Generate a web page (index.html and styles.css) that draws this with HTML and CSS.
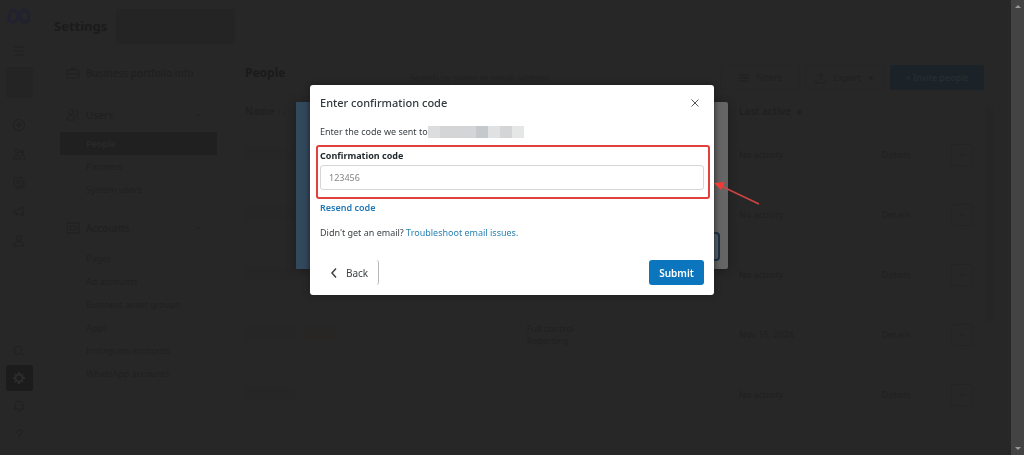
FILE: index.html
```html
<!DOCTYPE html>
<html lang="en">
<head>
<meta charset="utf-8">
<title>Settings</title>
<meta name="viewport" content="width=device-width, initial-scale=1">
<link rel="stylesheet" href="styles.css">
</head>
<body>
<div class="app">
  <nav class="rail" aria-label="Tools">
    <svg class="logo" viewBox="0 0 24 16"><path d="M2 11C2 6 4 2 7 2c4 0 6 12 10.500 12C20 14 22 13 22 10.500 22 6 20 2 17 2c-4 0-6 12-10.500 12C4 14 2 13 2 11z"/></svg>
    <button class="rail-btn" aria-label="Menu"><svg viewBox="0 0 14 14"><path d="M2 3h10M2 7h10M2 11h10"/></svg></button>
    <span class="avatar"></span>
    <button class="rail-btn" aria-label="Create"><svg viewBox="0 0 14 14"><circle cx="7" cy="7" r="5.500"/><path d="M7 4v6M4 7h6"/></svg></button>
    <button class="rail-btn" aria-label="People"><svg viewBox="0 0 14 14"><circle cx="5" cy="4" r="2"/><circle cx="10" cy="5" r="1.500"/><path d="M1 12c0-5 8-5 8 0zM10 8c2 0 3 2 3 4h-2"/></svg></button>
    <button class="rail-btn" aria-label="Content"><svg viewBox="0 0 14 14"><path d="M2 2h8v8H2zM4 12h8V4M4 5h4M4 7h4"/></svg></button>
    <button class="rail-btn" aria-label="Ads"><svg viewBox="0 0 14 14"><path d="M2 5h3l6-3v9L5 8H2zM4 8l1 4"/></svg></button>
    <button class="rail-btn" aria-label="Audience"><svg viewBox="0 0 14 14"><circle cx="7" cy="4" r="2.500"/><path d="M2 12c0-6 10-6 10 0z"/></svg></button>
    <span class="rail-space"></span>
    <button class="rail-btn" aria-label="Search"><svg viewBox="0 0 14 14"><circle cx="6" cy="6" r="4"/><path d="M9 9l4 4"/></svg></button>
    <button class="rail-btn current" aria-label="Settings"><svg viewBox="0 0 14 14"><circle cx="7" cy="7" r="3.500"/><path d="M7 1v2M7 11v2M1 7h2M11 7h2M3 3l1 1M10 10l1 1M11 3l-1 1M4 10l-1 1"/></svg></button>
    <button class="rail-btn" aria-label="Notifications"><svg viewBox="0 0 14 14"><path d="M2 10l1-2V6c0-5 8-5 8 0v2l1 2zM5 12h4"/></svg></button>
    <button class="rail-btn" aria-label="Help"><svg viewBox="0 0 14 14"><path d="M4 5c0-4 6-4 6-1 0 2-3 2-3 5M7 11v1"/></svg></button>
  </nav>

  <div class="page">
    <header class="top"><h1>Settings</h1><span class="account"></span></header>
    <div class="columns">
      <nav class="side" aria-label="Settings sections">
        <a class="group" href="#info"><svg viewBox="0 0 14 14"><path d="M1 4h12v8H1zM5 4V2h4v2M1 8h12"/></svg><span>Business portfolio info</span></a>
        <a class="group users" href="#users"><svg viewBox="0 0 14 14"><circle cx="5" cy="4" r="2.500"/><path d="M1 12c0-6 8-6 8 0zM9 2c4 0 3 4 1 5l3 5"/></svg><span>Users</span><svg class="chev" viewBox="0 0 10 10"><path d="M2 7l3-3 3 3"/></svg></a>
        <a class="item active" href="#people">People</a>
        <a class="item" href="#partners">Partners</a>
        <a class="item" href="#system">System users</a>
        <a class="group accounts" href="#accounts"><svg viewBox="0 0 14 14"><path d="M1 2h12v10H1zM4 5h6v4H4z"/></svg><span>Accounts</span><svg class="chev" viewBox="0 0 10 10"><path d="M2 7l3-3 3 3"/></svg></a>
        <a class="item" href="#pages">Pages</a>
        <a class="item" href="#ads">Ad accounts</a>
        <a class="item" href="#groups">Business asset groups</a>
        <a class="item" href="#apps">Apps</a>
        <a class="item" href="#instagram">Instagram accounts</a>
        <a class="item" href="#whatsapp">WhatsApp accounts</a>
      </nav>
      <main class="people">
        <div class="bar">
          <h2>People</h2>
          <input class="search" type="text" aria-label="Search people" placeholder="Search by name or email address">
          <button class="tool"><svg viewBox="0 0 12 12"><path d="M1 3h10M1 6h10M1 9h10M4 2v2M8 5v2M4 8v2"/></svg>Filters</button>
          <button class="tool"><svg viewBox="0 0 12 12"><path d="M6 8V2M3 4l3-3 3 3M1 8v3h10V8"/></svg>Export<span class="down">▼</span></button>
          <button class="tool invite">+ Invite people</button>
        </div>
        <div class="list">
          <table>
            <colgroup><col class="c-name"><col class="c-access"><col class="c-active"><col class="c-details"><col></colgroup>
            <thead><tr><th>Name ↑↓</th><th></th><th>Last active &nbsp;●</th><th></th><th></th></tr></thead>
            <tbody>
              <tr><td><span class="smudge"></span></td><td></td><td>No activity</td><td>Details</td><td><button class="more" aria-label="More">•••</button></td></tr>
              <tr><td><span class="smudge"></span></td><td></td><td>No activity</td><td>Details</td><td><button class="more" aria-label="More">•••</button></td></tr>
              <tr><td><span class="smudge"></span></td><td></td><td>No activity</td><td>Details</td><td><button class="more" aria-label="More">•••</button></td></tr>
              <tr><td><span class="smudge"></span><span class="smudge warm"></span></td><td>Full control<br>Reporting</td><td>Nov 15, 2024</td><td>Details</td><td><button class="more" aria-label="More">•••</button></td></tr>
              <tr><td><span class="smudge"></span></td><td></td><td>No activity</td><td>Details</td><td><button class="more" aria-label="More">•••</button></td></tr>
            </tbody>
          </table>
          <span class="thumb"></span>
        </div>
      </main>
    </div>
  </div>

  <div class="scroll" aria-hidden="true">
    <svg viewBox="0 0 13 13"><path d="M4 8l3-3 3 3z"/></svg>
    <svg viewBox="0 0 13 13"><path d="M4 5l3 3 3-3z"/></svg>
  </div>
</div>

<div class="overlay">
  <div class="under"><span class="under-art"></span><span class="under-btn"></span></div>
  <form class="dialog" role="dialog" aria-labelledby="dialog-title">
    <div class="head">
      <h2 id="dialog-title">Enter confirmation code</h2>
      <button type="button" class="close" aria-label="Close"><svg viewBox="0 0 10 10"><path d="M1.500 1.500l7 7M8.500 1.500l-7 7"/></svg></button>
    </div>
    <p class="sent">Enter the code we sent to <span class="masked"><i></i><i></i><i></i><i></i><i></i><i></i><i></i><i></i></span></p>
    <div class="field">
      <label for="code">Confirmation code</label>
      <input id="code" type="text" placeholder="123456">
    </div>
    <a class="resend" href="#resend">Resend code</a>
    <p class="trouble">Didn't get an email? <a href="#troubleshoot">Troubleshoot email issues.</a></p>
    <div class="actions">
      <button type="button" class="back"><svg viewBox="0 0 8 12"><path d="M6 1.500L2 6l4 4.500"/></svg>Back</button>
      <button type="submit" class="submit">Submit</button>
    </div>
    <svg class="arrow" viewBox="0 0 48 28"><path class="shaft" d="M8 6l38 18"/><path class="tip" d="M1 3l11-1-4 8z"/></svg>
  </form>
</div>
</body>
</html>
```
FILE: styles.css
```css
* { box-sizing: border-box; }

body {
  margin: 0;
  background: #272727;
  color: #1e1e1e;
  font: 9px/12px "Noto Sans", "Open Sans", sans-serif;
}

h1, h2, p { margin: 0; }
a { color: inherit; text-decoration: none; }
button, input { font: inherit; color: inherit; margin: 0; }
button { padding: 0; border: 0; background: none; }
svg { fill: none; stroke: currentColor; flex: none; }

.app {
  display: grid;
  grid-template-columns: 40px minmax(0, 1fr) 13px;
  min-height: 100vh;
}

/* Tool rail */
.rail {
  display: flex;
  flex-direction: column;
  align-items: center;
  padding: 8px 2px 6px 0;
  color: #202020;
}
.logo { width: 24px; height: 16px; margin-bottom: 12px; color: #212132; stroke-width: 3; }
.rail-btn { display: flex; align-items: center; justify-content: center; width: 27px; height: 29px; }
.rail-btn svg { width: 14px; height: 14px; }
.avatar { width: 27px; height: 31px; margin: 2px 0 12px; border-radius: 3px; background: #242424; }
.rail-space { flex: 1; }
.current { height: 26px; border-radius: 3px; background: #1c1c1c; color: #2c2c2c; }
.current svg { stroke-width: 2; }

/* Settings page */
.page { padding: 8px 18px 0 14px; }
.top { display: flex; align-items: center; gap: 9px; height: 36px; }
.top h1 { font-size: 13px; line-height: 20px; color: #1b1b1b; }
.account { width: 119px; height: 35px; background: #242424; }
.columns { display: grid; grid-template-columns: 163px minmax(0, 1fr); gap: 28px; padding-top: 18px; }

.side { display: flex; flex-direction: column; padding-left: 6px; color: #202020; }
.group { display: flex; align-items: center; gap: 6px; height: 22px; padding: 0 14px 0 6px; font-size: 10px; font-weight: 500; }
.group svg { width: 14px; height: 14px; }
.group span { flex: 1; }
.group .chev { width: 10px; height: 10px; }
.users { margin: 20px 0 6px; }
.accounts { margin: 16px 0 8px; }
.item { height: 23px; padding-left: 26px; line-height: 23px; }
.item.active { background: #202020; color: #2a2a2a; font-weight: 600; }

.bar { display: flex; align-items: center; gap: 5px; padding: 3px 9px 7px 0; }
.bar h2 { align-self: flex-start; width: 160px; font-size: 12px; line-height: 16px; color: #1b1b1b; }
.search { flex: 1; min-width: 0; border: 0; background: none; padding: 0; }
.search::placeholder { color: #222; opacity: 1; }
.tool { display: flex; align-items: center; justify-content: center; gap: 6px; width: 80px; height: 25px; border: 1px solid #252525; border-radius: 3px; color: #202020; }
.tool svg { width: 12px; height: 12px; }
.down { font-size: 8px; }
.invite { width: 94px; border: 0; background: #1c2328; color: #283035; }

.list { display: flex; align-items: flex-start; gap: 8px; }
table { flex: 1; width: 100%; table-layout: fixed; border-collapse: collapse; color: #202020; }
th, td { padding: 0; text-align: left; }
th { height: 28px; font-size: 10px; font-weight: 600; }
td { height: 60px; }
.c-name { width: 38.5%; }
.c-access { width: 29%; }
.c-active { width: 19.5%; }
.c-details { width: 9.5%; }
.smudge { display: inline-block; width: 50px; height: 15px; margin-right: 8px; background: #262626; }
.warm { width: 32px; background: #282525; }
.more { width: 22px; height: 22px; border: 1px solid #242424; border-radius: 3px; font-size: 6px; }
.thumb { width: 8px; height: 216px; margin-top: 10px; background: #252525; }

.scroll { display: flex; flex-direction: column; justify-content: space-between; background: #434343; }
.scroll svg { width: 13px; height: 13px; fill: #999; stroke: none; }

/* Dialogs */
.overlay {
  position: fixed;
  inset: 0;
  display: grid;
  justify-items: center;
  align-items: start;
  padding-top: 85px;
}
.overlay > * { grid-area: 1 / 1; }

.under {
  display: flex;
  justify-content: space-between;
  align-items: flex-end;
  width: 432px;
  max-width: 100%;
  min-height: 167px;
  margin-top: 17px;
  padding-right: 8px;
  border-radius: 2px;
  background: #656565;
  box-shadow: 0 1px 8px #1c1c1c;
}
.under-art { align-self: stretch; width: 150px; background: #32485d; }
.under-btn { width: 60px; height: 29px; margin-bottom: 8px; border: 2px solid #1c3043; border-radius: 4px; background: #56606a; }

.dialog {
  position: relative;
  width: 404px;
  max-width: 100%;
  padding: 10px;
  border-radius: 3px;
  background: #fff;
  color: #3c4246;
  box-shadow: 0 0 6px #1c1c1c;
}
.head { display: flex; align-items: center; justify-content: space-between; height: 16px; padding-right: 4px; }
.head h2 { font-size: 11px; line-height: 16px; font-weight: 500; color: #31393d; }
.close { display: flex; color: #555; }
.close svg { width: 10px; height: 10px; }
.sent { display: flex; align-items: center; margin-top: 15px; }
.masked { display: flex; width: 96px; height: 12px; }
.masked i { flex: 1; background: #d3d5d7; }
.masked i:nth-child(1) { background: #dcddde; }
.masked i:nth-child(5) { background: #c6c9cc; }
.masked i:nth-child(6) { background: #dfe1e3; }
.masked i:nth-child(8) { background: #e5e7e7; }

.field { margin: 7px -6px 0 -4px; padding: 1px 4px 7px 2px; border: 2px solid #e2403c; border-radius: 3px; }
.field label { display: block; line-height: 16px; margin-bottom: 1px; font-weight: 700; color: #1f272b; }
.field input { display: block; width: 100%; height: 25px; padding: 0 8px; border: 1px solid #d3d6d8; border-radius: 3px; background: #fff; }
.field input::placeholder { color: #858585; opacity: 1; }

.resend { display: block; width: max-content; margin-top: 3px; font-weight: 600; color: #1f78b4; }
.trouble { margin-top: 13px; }
.trouble a { color: #2a81b5; }
.actions { display: flex; justify-content: space-between; margin-top: 21px; }
.actions button { display: flex; align-items: center; justify-content: center; height: 25px; border-radius: 3px; font-size: 10px; }
.actions .back { gap: 8px; width: 59px; border-right: 1px solid #b5b8ba; }
.back svg { width: 8px; height: 12px; stroke-width: 1.500; }
.actions .submit { width: 55px; background: #0b76be; color: #fff; font-weight: 600; }

.arrow { position: absolute; left: 403px; top: 95px; width: 48px; height: 28px; }
.shaft { stroke: #cf4442; stroke-width: 1.500; }
.tip { fill: #f13b36; stroke: none; }
```
